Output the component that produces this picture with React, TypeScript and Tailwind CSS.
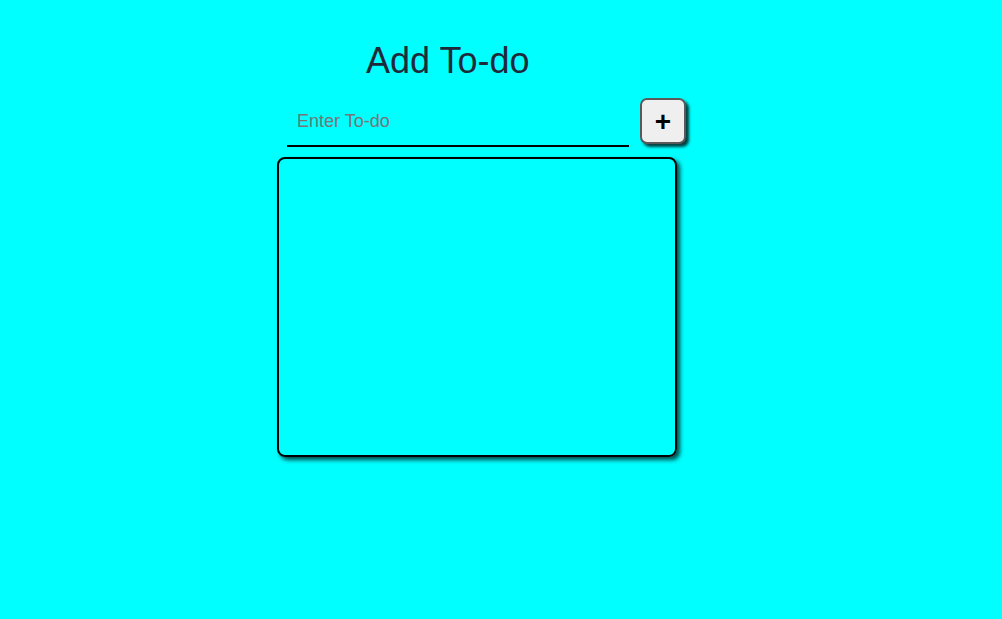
export default function App() {
  return (
    <div className="min-h-[619px] w-full bg-[#00ffff] font-['Liberation_Sans',Arial,sans-serif]">
      <div className="flex flex-col pl-[277px] pt-[41px]">
        <h1 className="ml-[89px] text-[36px] leading-[40px] text-[#1e2a3a]">Add To-do</h1>

        <div className="mt-[17px] flex items-start">
          <input
            type="text"
            placeholder="Enter To-do"
            className="ml-[10px] h-[49px] w-[342px] border-b-2 border-black bg-transparent px-[10px] text-[18px] text-black outline-none placeholder:text-[#757575]"
          />
          <button className="ml-[11px] flex h-[46px] w-[46px] items-center justify-center rounded-[7px] border-2 border-[#5a5a5a] bg-[#efefef] pt-[2px] text-[28px] font-bold leading-none text-black shadow-[3px_3px_3px_rgba(0,0,0,0.75)]">
            +
          </button>
        </div>

        <div className="mt-[10px] h-[300px] w-[400px] rounded-[8px] border-2 border-black shadow-[3px_3px_4px_rgba(0,0,0,0.7)]" />
      </div>
    </div>
  );
}
